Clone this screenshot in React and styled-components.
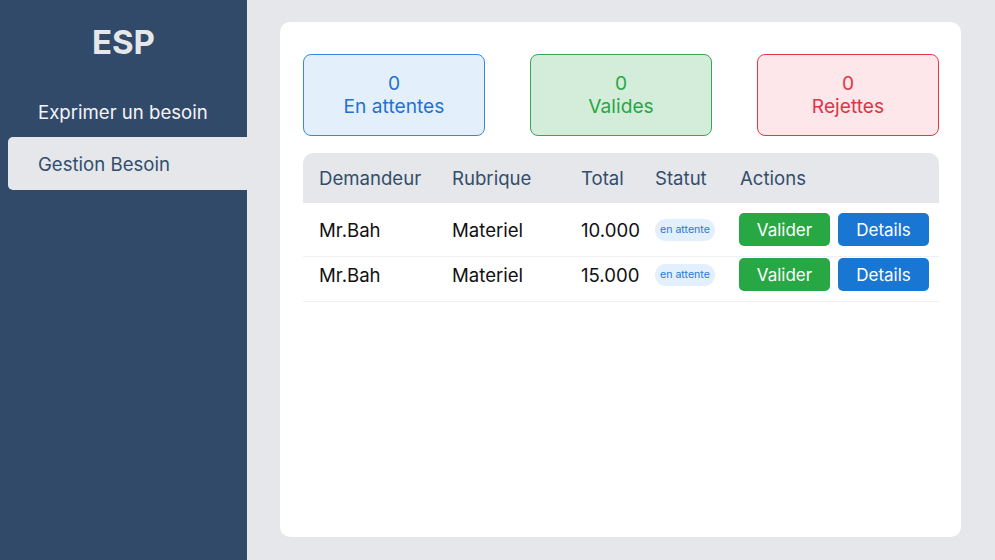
import React from "react";
import styled, { createGlobalStyle } from "styled-components";

const Global = createGlobalStyle`
  html, body { margin: 0; padding: 0; }
  body { font-family: Inter, "Noto Sans", sans-serif; background: #e5e7eb; }
  * { box-sizing: border-box; }
`;

const Layout = styled.div`
  display: flex;
  width: 995px;
  height: 560px;
  background: #e5e7eb;
`;

const Sidebar = styled.aside`
  width: 247px;
  flex-shrink: 0;
  background: #324a6a;
  padding: 22px 0 0 8px;
  display: flex;
  flex-direction: column;
`;

const Logo = styled.h1`
  margin: 0 0 25px 0;
  height: 40px;
  line-height: 40px;
  text-align: center;
  padding-right: 8px;
  font-size: 33px;
  font-weight: 700;
  color: #e5e7eb;
`;

const NavItem = styled.div`
  height: ${(p) => (p.$active ? 53 : 50)}px;
  display: flex;
  align-items: center;
  padding-left: 30px;
  font-size: 18.6px;
  color: ${(p) => (p.$active ? "#334e6b" : "#f3f4f6")};
  background: ${(p) => (p.$active ? "#e5e7eb" : "transparent")};
  border-radius: 5px 0 0 5px;
`;

const Main = styled.main`
  flex: 1;
  padding: 22px 34px 23px 33px;
  display: flex;
`;

const Card = styled.section`
  flex: 1;
  background: #ffffff;
  border-radius: 10px;
  padding: 32px 22px 0 23px;
`;

const Stats = styled.div`
  display: flex;
  justify-content: space-between;
  margin-bottom: 17px;
`;

const palette = {
  blue: { bg: "#e3f0fc", border: "#3a86df", fg: "#1f72d1" },
  green: { bg: "#d4edda", border: "#35a852", fg: "#28a745" },
  red: { bg: "#fde7ea", border: "#e03a4a", fg: "#dc3545" },
};

const StatBox = styled.div`
  width: 182px;
  height: 82px;
  border-radius: 8px;
  border: 1px solid ${(p) => palette[p.$tone].border};
  background: ${(p) => palette[p.$tone].bg};
  color: ${(p) => palette[p.$tone].fg};
  display: flex;
  flex-direction: column;
  align-items: center;
  justify-content: center;
  font-size: 19.2px;
  line-height: 23px;
`;

const Table = styled.div`
  display: grid;
  grid-template-columns: 133px 129px 74px 85px 1fr;
`;

const HeadCell = styled.div`
  height: 50px;
  background: #e5e7eb;
  display: flex;
  align-items: center;
  padding-left: 16px;
  font-size: 18.6px;
  color: #334e6b;
  &:first-child { border-top-left-radius: 10px; }
  &:nth-child(5) { border-top-right-radius: 10px; }
`;

const Cell = styled.div`
  display: flex;
  align-items: center;
  gap: 8px;
  padding: ${(p) => (p.$first ? "10px" : "1px")} 0 10px ${(p) => (p.$pl ?? 16)}px;
  min-height: ${(p) => (p.$first ? 54 : 44)}px;
  border-bottom: 1px solid #eef0f3;
  font-size: 18.6px;
  color: #111111;
`;

const Badge = styled.span`
  display: inline-flex;
  align-items: center;
  height: 22px;
  padding: 0 5px;
  border-radius: 11px;
  background: #e2effc;
  color: #2a78d4;
  font-size: 10.6px;
`;

const Button = styled.button`
  width: 91px;
  height: 33px;
  border: none;
  border-radius: 5px;
  background: ${(p) => (p.$variant === "green" ? "#28a745" : "#1976d2")};
  color: #ffffff;
  font-family: inherit;
  font-size: 17px;
  cursor: pointer;
`;

const rows = [
  { name: "Mr.Bah", rub: "Materiel", total: "10.000" },
  { name: "Mr.Bah", rub: "Materiel", total: "15.000" },
];

export default function App() {
  return (
    <>
      <Global />
      <Layout>
        <Sidebar>
          <Logo>ESP</Logo>
          <NavItem>Exprimer un besoin</NavItem>
          <NavItem $active>Gestion Besoin</NavItem>
        </Sidebar>
        <Main>
          <Card>
            <Stats>
              <StatBox $tone="blue">
                <span>0</span>
                <span>En attentes</span>
              </StatBox>
              <StatBox $tone="green">
                <span>0</span>
                <span>Valides</span>
              </StatBox>
              <StatBox $tone="red">
                <span>0</span>
                <span>Rejettes</span>
              </StatBox>
            </Stats>
            <Table>
              <HeadCell>Demandeur</HeadCell>
              <HeadCell>Rubrique</HeadCell>
              <HeadCell>Total</HeadCell>
              <HeadCell>Statut</HeadCell>
              <HeadCell>Actions</HeadCell>
              {rows.map((r, i) => (
                <React.Fragment key={i}>
                  <Cell $first={i === 0}>{r.name}</Cell>
                  <Cell $first={i === 0}>{r.rub}</Cell>
                  <Cell $first={i === 0}>{r.total}</Cell>
                  <Cell $first={i === 0}>
                    <Badge>en attente</Badge>
                  </Cell>
                  <Cell $first={i === 0} $pl={15}>
                    <Button $variant="green">Valider</Button>
                    <Button $variant="blue">Details</Button>
                  </Cell>
                </React.Fragment>
              ))}
            </Table>
          </Card>
        </Main>
      </Layout>
    </>
  );
}
